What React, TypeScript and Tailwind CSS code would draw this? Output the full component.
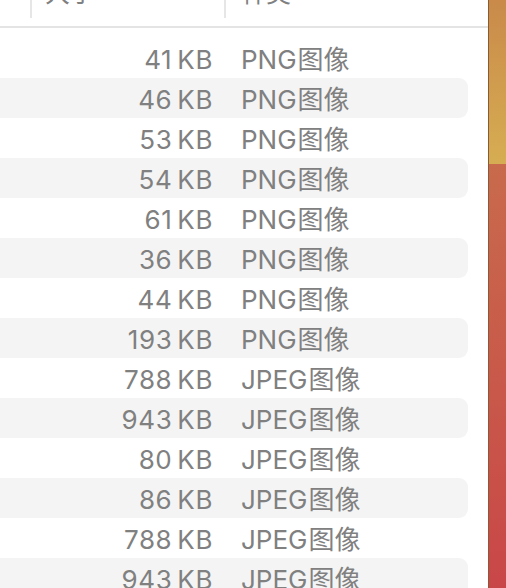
import React from "react";

const rows: [string, string][] = [
  ["41", "PNG"],
  ["46", "PNG"],
  ["53", "PNG"],
  ["54", "PNG"],
  ["61", "PNG"],
  ["36", "PNG"],
  ["44", "PNG"],
  ["193", "PNG"],
  ["788", "JPEG"],
  ["943", "JPEG"],
  ["80", "JPEG"],
  ["86", "JPEG"],
  ["788", "JPEG"],
  ["943", "JPEG"],
];

const font = { fontFamily: 'Inter, "Noto Sans CJK SC", sans-serif' };

export default function App() {
  return (
    <div className="flex w-[506px] h-[588px] overflow-hidden bg-white" style={font}>
      <div className="w-[488px] shrink-0 flex flex-col bg-white">
        <div className="relative h-[28px] shrink-0 border-b-2 border-[#e4e4e4]">
          <div className="absolute left-[30px] top-0 w-[2px] h-[18px] bg-[#e6e6e6]" />
          <div className="absolute left-[224px] top-0 w-[2px] h-[18px] bg-[#e6e6e6]" />
          <div className="absolute left-[45px] top-[-23px] text-[25px] leading-[32px] text-[#808080]">大小</div>
          <div className="absolute left-[241px] top-[-23px] text-[25px] leading-[32px] text-[#808080]">种类</div>
        </div>
        <div className="flex flex-col pt-[10px]">
          {rows.map(([size, kind], i) => (
            <div
              key={i}
              className={
                "flex items-center h-[40px] shrink-0 text-[26px] text-[#808080] mr-[20px] pt-[2px] " +
                (i % 2 === 1 ? "bg-[#f4f4f4] rounded-r-[9px]" : "")
              }
            >
              <div className="w-[213px] text-right tracking-[0.6px]">
                {size}
                <span className="ml-[5px]">KB</span>
              </div>
              <div className="ml-[28px]">
                {kind}
                <span className="ml-[1px]">图像</span>
              </div>
            </div>
          ))}
        </div>
      </div>
      <div className="flex-1 flex flex-col border-l border-[#8a5a38]">
        <div className="h-[164px] bg-gradient-to-b from-[#c98a4a] to-[#d6ad52]" />
        <div className="flex-1 bg-gradient-to-b from-[#c86a4c] to-[#c94648]" />
      </div>
    </div>
  );
}
